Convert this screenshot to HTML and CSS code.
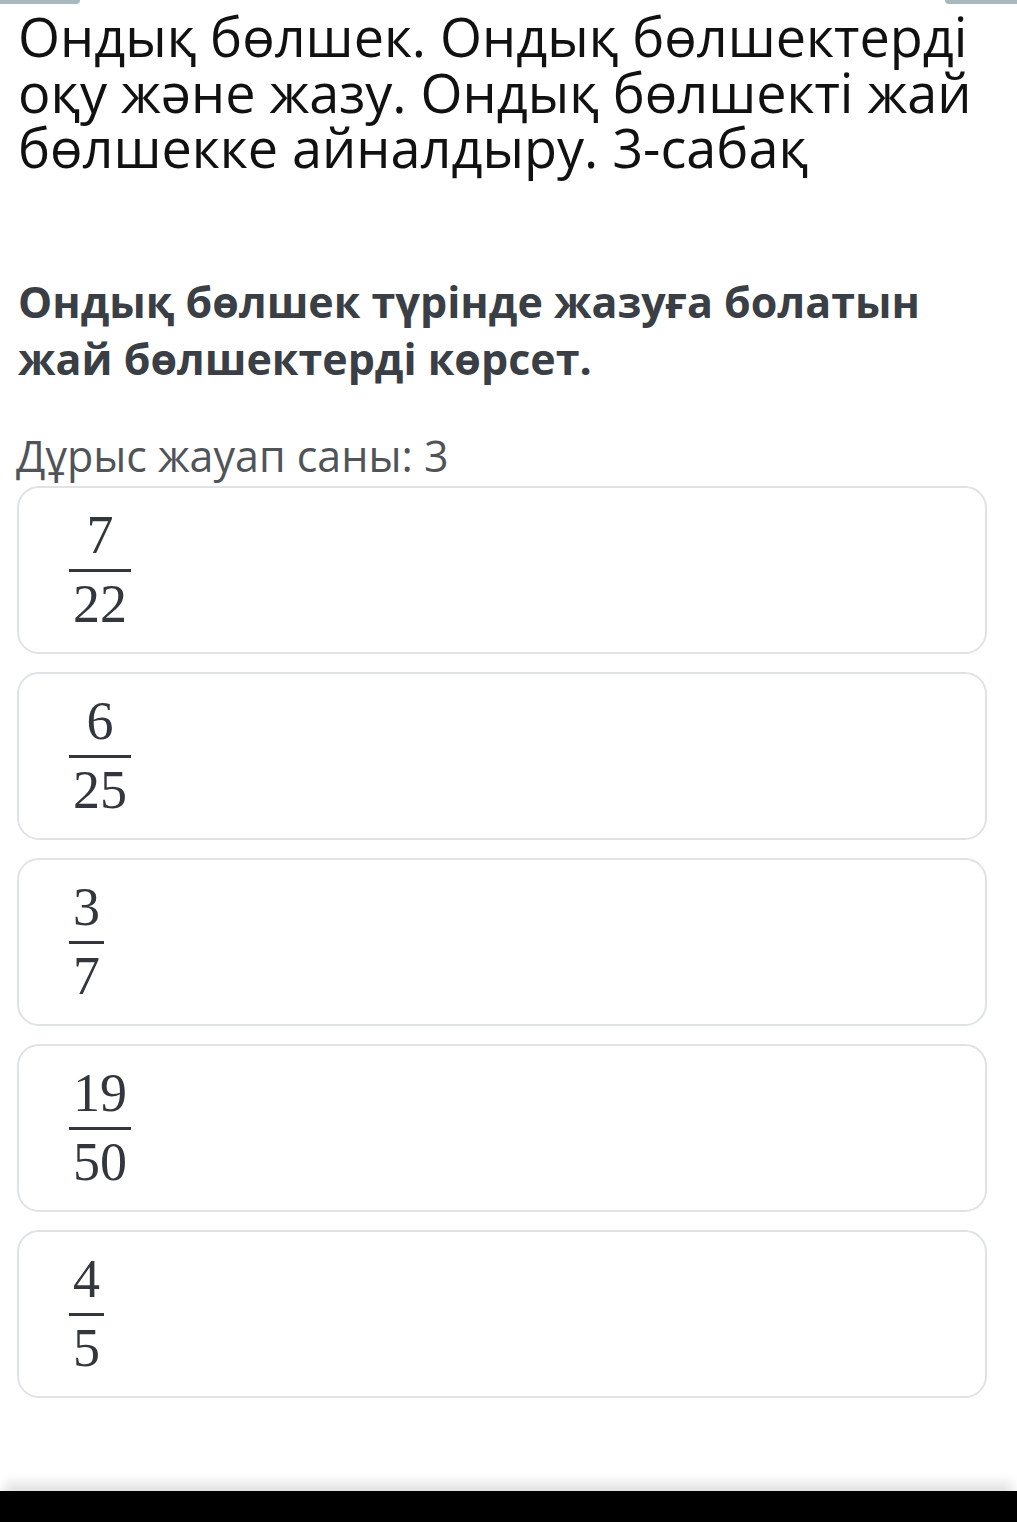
FILE: index.html
```html
<!DOCTYPE html>
<html lang="kk">
<head>
<meta charset="utf-8">
<link rel="stylesheet" href="styles.css">
</head>
<body>
<div class="page">
  <div class="tabs"><span class="tab tab-left"></span><span class="tab tab-right"></span></div>
  <h1 class="title">Ондық бөлшек. Ондық бөлшектерді оқу және жазу. Ондық бөлшекті жай бөлшекке айналдыру. 3-сабақ</h1>
  <p class="question">Ондық бөлшек түрінде жазуға болатын жай бөлшектерді көрсет.</p>
  <p class="count">Дұрыс жауап саны: 3</p>
  <div class="options">
    <div class="card"><span class="frac"><span class="num">7</span><span class="den">22</span></span></div>
    <div class="card"><span class="frac"><span class="num">6</span><span class="den">25</span></span></div>
    <div class="card"><span class="frac"><span class="num">3</span><span class="den">7</span></span></div>
    <div class="card"><span class="frac"><span class="num">19</span><span class="den">50</span></span></div>
    <div class="card"><span class="frac"><span class="num">4</span><span class="den">5</span></span></div>
  </div>
  <div class="navbar"></div>
</div>
</body>
</html>
```
FILE: styles.css
```css
html, body {
  margin: 0;
  padding: 0;
  background: #ffffff;
}
.page {
  min-height: 1522px;
  display: flex;
  flex-direction: column;
  font-family: "Open Sans", "Noto Sans", sans-serif;
}
.tabs {
  display: flex;
  justify-content: space-between;
  height: 4px;
}
.tab {
  display: block;
  height: 4px;
  background: #a9b7bf;
}
.tab-left {
  width: 80px;
  border-bottom-right-radius: 4px;
}
.tab-right {
  width: 72px;
  border-bottom-left-radius: 4px;
}
.title {
  margin: 5px 0 0 0;
  padding: 0 30px 0 18px;
  font-size: 54px;
  font-weight: 400;
  line-height: 55.5px;
  color: #111111;
}
.question {
  margin: 97px 0 0 0;
  padding: 0 40px 0 18px;
  font-size: 43px;
  font-weight: 700;
  line-height: 57px;
  color: #3a3e45;
}
.count {
  margin: 45px 0 0 0;
  padding: 0 0 0 16px;
  font-size: 43px;
  font-weight: 400;
  line-height: 48px;
  color: #505458;
}
.options {
  display: flex;
  flex-direction: column;
  gap: 18px;
  margin: 6px 30px 0 17px;
}
.card {
  height: 168px;
  box-sizing: border-box;
  border: 2.5px solid #dfe3e5;
  border-radius: 22px;
  display: flex;
  align-items: center;
  padding-left: 48px;
}
.frac {
  display: inline-flex;
  flex-direction: column;
  align-items: center;
  font-family: "Liberation Serif", "DejaVu Serif", serif;
  font-size: 54px;
  color: #33373d;
  padding: 0 2px;
}
.num {
  line-height: 58px;
  padding: 0 4px 5px;
}
.den {
  line-height: 58px;
  border-top: 3px solid #33373d;
  padding: 3px 4px 0;
  align-self: stretch;
  text-align: center;
}
.navbar {
  margin-top: auto;
  height: 31px;
  background: #000000;
  box-shadow: 0 -12px 12px -4px rgba(0, 0, 0, 0.12);
}
```
